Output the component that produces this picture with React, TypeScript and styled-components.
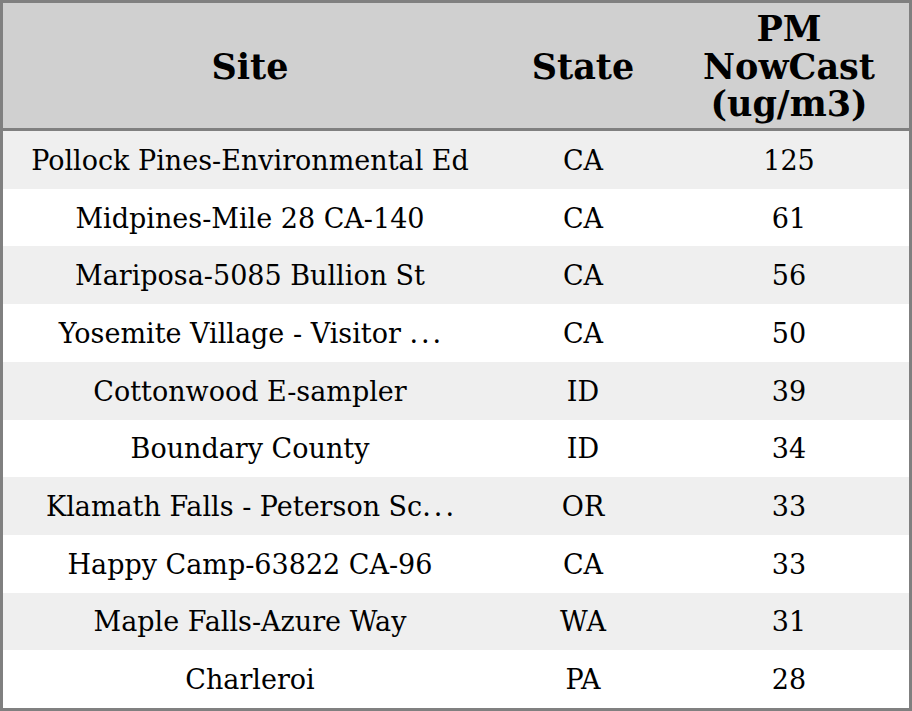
import React from "react";
import styled, { createGlobalStyle } from "styled-components";

const Global = createGlobalStyle`
  html, body { margin: 0; padding: 0; background: #ffffff; }
  * { box-sizing: border-box; }
`;

const Table = styled.div`
  width: 912px;
  height: 711px;
  border: 3px solid #808080;
  display: grid;
  grid-template-rows: 128px repeat(10, 1fr);
  font-family: "DejaVu Serif", serif;
  color: #000;
`;

const Row = styled.div<{ $shade?: string }>`
  display: grid;
  grid-template-columns: 494px 172px 1fr;
  background: ${(p) => p.$shade ?? "#ffffff"};
`;

const HeadRow = styled(Row)`
  border-bottom: 3px solid #808080;
`;

const HeadCell = styled.div`
  display: flex;
  align-items: center;
  justify-content: center;
  text-align: center;
  font-weight: bold;
  font-size: 35px;
  line-height: 37.5px;
  padding-top: 2px;
`;

const Cell = styled.div`
  display: flex;
  align-items: center;
  justify-content: center;
  text-align: center;
  font-size: 27px;
  white-space: nowrap;
  padding-top: 1px;
`;

const SiteText = styled.span`
  white-space: pre;
`;

const Dots = styled.span`
  letter-spacing: 3px;
  margin-right: -3px;
`;

const rows: [string, boolean, string, number][] = [
  ["Pollock Pines-Environmental Ed", false, "CA", 125],
  ["Midpines-Mile 28 CA-140", false, "CA", 61],
  ["Mariposa-5085 Bullion St", false, "CA", 56],
  ["Yosemite Village - Visitor ", true, "CA", 50],
  ["Cottonwood E-sampler", false, "ID", 39],
  ["Boundary County", false, "ID", 34],
  ["Klamath Falls - Peterson Sc", true, "OR", 33],
  ["Happy Camp-63822 CA-96", false, "CA", 33],
  ["Maple Falls-Azure Way", false, "WA", 31],
  ["Charleroi", false, "PA", 28],
];

export default function App() {
  return (
    <>
      <Global />
      <Table>
        <HeadRow $shade="#d0d0d0">
          <HeadCell>Site</HeadCell>
          <HeadCell>State</HeadCell>
          <HeadCell>
            PM
            <br />
            NowCast
            <br />
            (ug/m3)
          </HeadCell>
        </HeadRow>
        {rows.map(([site, cut, state, v], i) => (
          <Row key={i} $shade={i % 2 === 0 ? "#efefef" : "#ffffff"}>
            <Cell>
              <SiteText>{site}</SiteText>
              {cut && <Dots>...</Dots>}
            </Cell>
            <Cell>{state}</Cell>
            <Cell>{v}</Cell>
          </Row>
        ))}
      </Table>
    </>
  );
}
